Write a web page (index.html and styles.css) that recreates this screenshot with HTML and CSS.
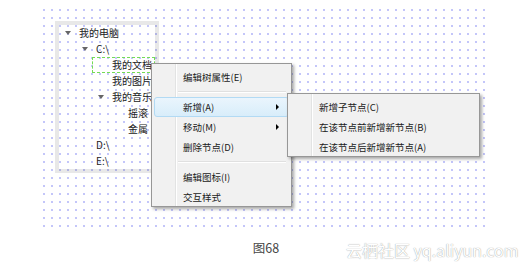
FILE: index.html
```html
<!DOCTYPE html>
<html lang="zh-CN">
<head>
    <meta charset="UTF-8">
    <meta name="viewport" content="width=device-width, initial-scale=1.0">
    <title>图68 树节点右键菜单</title>
    <link rel="stylesheet" href="styles.css">
</head>
<body>
    <div class="page">
        <div class="canvas">
            <div class="tree">
                <div class="node lv0"><span class="caret"></span>我的电脑</div>
                <div class="node lv1"><span class="caret"></span>C:\</div>
                <div class="node lv2"><span class="caret none"></span>我的文档</div>
                <div class="node lv2"><span class="caret none"></span>我的图片</div>
                <div class="node lv2"><span class="caret"></span>我的音乐</div>
                <div class="node lv3"><span class="caret none"></span>摇滚</div>
                <div class="node lv3"><span class="caret none"></span>金属</div>
                <div class="node lv1"><span class="caret none"></span>D:\</div>
                <div class="node lv1"><span class="caret none"></span>E:\</div>
                <div class="focus"></div>
            </div>

            <div class="menu main-menu">
                <div class="item">编辑树属性(E)</div>
                <div class="sep"></div>
                <div class="item active">新增(A)<span class="arrow"></span></div>
                <div class="item">移动(M)<span class="arrow"></span></div>
                <div class="item">删除节点(D)</div>
                <div class="sep"></div>
                <div class="item">编辑图标(I)</div>
                <div class="item">交互样式</div>
            </div>

            <div class="menu sub-menu">
                <div class="item">新增子节点(C)</div>
                <div class="item">在该节点前新增新节点(B)</div>
                <div class="item">在该节点后新增新节点(A)</div>
            </div>
        </div>

        <div class="caption-row">
            <span class="caption">图68</span>
            <span class="watermark">云栖社区 yq.aliyun.com</span>
        </div>
    </div>
</body>
</html>
```

FILE: styles.css
```css
body {
    margin: 0;
    background: #fff;
    font-family: "Noto Sans CJK SC", "Noto Sans", sans-serif;
    color: #222;
}
.page {
    width: 532px;
    height: 270px;
    position: relative;
    overflow: hidden;
}

/* dotted design canvas */
.canvas {
    position: relative;
    margin: 8px 0 0 42px;
    width: 446px;
    height: 222px;
    padding: 13px 0 0 13px;
    box-sizing: border-box;
    background-image: radial-gradient(circle, #a4a8f6 0, #a4a8f6 0.5px, rgba(170, 175, 247, 0) 1.1px);
    background-size: 8px 8px;
    background-position: -2px -2px;
}

/* tree panel */
.tree {
    position: relative;
    width: 104px;
    height: 152px;
    box-sizing: border-box;
    border: 4px solid rgba(0, 0, 0, 0.09);
}
.node {
    height: 16px;
    line-height: 16px;
    font-size: 10px;
    white-space: nowrap;
    color: #222;
}
.lv0 { padding-left: 6px; }
.lv1 { padding-left: 23px; }
.lv2 { padding-left: 39px; }
.lv3 { padding-left: 55px; }
.caret {
    display: inline-block;
    width: 0;
    height: 0;
    border-top: 4px solid #666;
    border-left: 3.5px solid transparent;
    border-right: 3.5px solid transparent;
    margin-right: 8px;
    vertical-align: 2px;
}
.caret.none {
    border-top-color: transparent;
}
.focus {
    position: absolute;
    top: 32px;
    left: 33px;
    right: 0;
    height: 16px;
    box-sizing: border-box;
    border: 1px dashed #74dc55;
}

/* context menus */
.menu {
    position: absolute;
    box-sizing: border-box;
    border: 1px solid #979797;
    padding: 3px 2px 0 2px;
    background:
        linear-gradient(to right, transparent 23px, #e2e3e3 23px, #e2e3e3 24px, #fff 24px, #fff 25px, transparent 25px),
        #f1f1f1;
    box-shadow: 2px 2px 3px rgba(0, 0, 0, 0.35);
    font-size: 9.5px;
    color: #1a1a1a;
}
.main-menu {
    left: 109px;
    top: 55px;
    width: 141px;
    height: 144px;
}
.sub-menu {
    left: 245px;
    top: 85px;
    width: 193px;
    height: 64px;
}
.item {
    display: flex;
    justify-content: space-between;
    align-items: center;
    height: 20px;
    box-sizing: border-box;
    padding-left: 28px;
    border: 1px solid transparent;
    border-radius: 3px;
    white-space: nowrap;
}
.item.active {
    background: linear-gradient(#eaf5fd, #d8edfa);
    border-color: #b2daf4;
}
.arrow {
    width: 0;
    height: 0;
    border-left: 3px solid #000;
    border-top: 3px solid transparent;
    border-bottom: 3px solid transparent;
    margin-right: 9px;
}
.sep {
    height: 10px;
    margin: 0 3px 0 24px;
    background: linear-gradient(transparent 4px, #e0e0e0 4px, #e0e0e0 5px, #fff 5px, #fff 6px, transparent 6px);
}

/* caption */
.caption-row {
    display: flex;
    justify-content: center;
    margin-top: 9px;
}
.caption {
    font-size: 12.5px;
    line-height: 18px;
    color: #444;
}
.watermark {
    position: absolute;
    left: 346px;
    top: 240px;
    font-size: 16px;
    line-height: 20px;
    color: #fff;
    text-shadow: 0 0 1px rgba(80, 80, 80, 0.45), 0 0 1px rgba(80, 80, 80, 0.3);
    white-space: nowrap;
}
```
